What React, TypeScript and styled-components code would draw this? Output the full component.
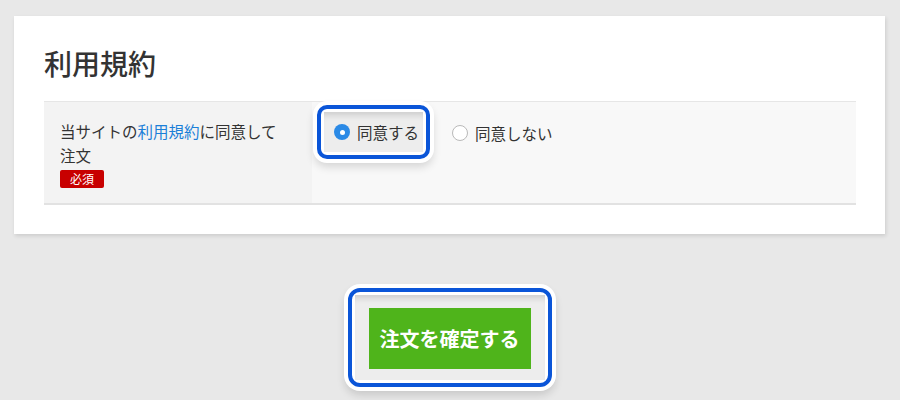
import React from 'react'
import styled, { createGlobalStyle } from 'styled-components'

const GlobalStyle = createGlobalStyle`
  html, body {
    margin: 0;
    padding: 0;
    background: #e8e8e8;
  }
  body {
    font-family: "Noto Sans CJK JP", "Noto Sans", sans-serif;
    color: #333;
  }
`

const Page = styled.main`
  width: 900px;
  height: 400px;
  padding: 16px 15px 0 14px;
  box-sizing: border-box;
  display: flex;
  flex-direction: column;
  align-items: stretch;
`

const Card = styled.section`
  background: #fff;
  padding: 26px 29px 29px 30px;
  box-shadow: 1px 2px 4px rgba(0, 0, 0, 0.12);
`

const Title = styled.h2`
  margin: 0 0 17px;
  font-size: 28px;
  line-height: 42px;
  font-weight: 500;
  color: #333;
`

const Table = styled.div`
  display: grid;
  grid-template-columns: 268px 1fr;
  border-top: 1px solid #e6e6e6;
  border-bottom: 2px solid #e2e2e2;
  height: 101px;
`

const HeadCell = styled.div`
  background: #f3f3f3;
  padding: 17px 34px 0 16px;
  font-size: 15.5px;
  line-height: 24px;
`

const Link = styled.a`
  color: #1b7fd8;
  text-decoration: none;
`

const Badge = styled.span`
  display: block;
  margin-top: 3px;
  width: 44px;
  height: 18px;
  line-height: 18px;
  background: #c80000;
  color: #fff;
  font-size: 12px;
  text-align: center;
  border-radius: 2px;
`

const BodyCell = styled.div`
  background: #f8f8f8;
  padding: 3px 0 0 5px;
  display: flex;
  align-items: flex-start;
  gap: 22px;
`

const Highlight = styled.div<{ $radius: number }>`
  border: 4px solid #0a55d8;
  border-radius: ${p => p.$radius}px;
  padding: 3px;
  background: #fff;
  box-shadow: 0 0 0 4px #fff, 0 5px 8px 3px rgba(0, 0, 0, 0.14);
`

const Shade = styled.div<{ $pad: string }>`
  padding: ${p => p.$pad};
  background: #ededed;
  box-shadow: inset 0 7px 6px -4px rgba(0, 0, 0, 0.14);
  display: flex;
`

const Option = styled.label`
  display: flex;
  align-items: center;
  gap: 7px;
  font-size: 15.5px;
  line-height: 24px;
  color: #333;
  white-space: nowrap;
`

const Radio = styled.span<{ $checked?: boolean }>`
  width: 16px;
  height: 16px;
  border-radius: 50%;
  box-sizing: border-box;
  display: inline-flex;
  align-items: center;
  justify-content: center;
  background: ${p => (p.$checked ? '#2b8ae6' : '#fff')};
  border: ${p => (p.$checked ? 'none' : '1px solid #b9b9b9')};
  &::after {
    content: '';
    width: 5px;
    height: 5px;
    border-radius: 50%;
    background: #fff;
    display: ${p => (p.$checked ? 'block' : 'none')};
  }
`

const PlainOption = styled.div`
  margin-top: 16px;
  display: flex;
`

const Footer = styled.div`
  display: flex;
  justify-content: center;
  padding-top: 54px;
`

const SubmitBtn = styled.button`
  width: 162px;
  height: 61px;
  border: none;
  background: #4fb41b;
  color: #fff;
  font-family: "Noto Sans CJK JP", sans-serif;
  font-size: 20px;
  font-weight: 700;
  cursor: pointer;
`

const App = () => {
  return (
    <>
      <GlobalStyle />
      <Page>
        <Card>
          <Title>利用規約</Title>
          <Table>
            <HeadCell>
              当サイトの<Link href="#">利用規約</Link>に同意して注文
              <Badge>必須</Badge>
            </HeadCell>
            <BodyCell>
              <Highlight $radius={10}>
                <Shade $pad="8px 4px 8px 10px">
                  <Option>
                    <Radio $checked />
                    同意する
                  </Option>
                </Shade>
              </Highlight>
              <PlainOption>
                <Option>
                  <Radio />
                  同意しない
                </Option>
              </PlainOption>
            </BodyCell>
          </Table>
        </Card>
        <Footer>
          <Highlight $radius={12}>
            <Shade $pad="13px 14px 11px 14px">
              <SubmitBtn>注文を確定する</SubmitBtn>
            </Shade>
          </Highlight>
        </Footer>
      </Page>
    </>
  )
}

export default App
